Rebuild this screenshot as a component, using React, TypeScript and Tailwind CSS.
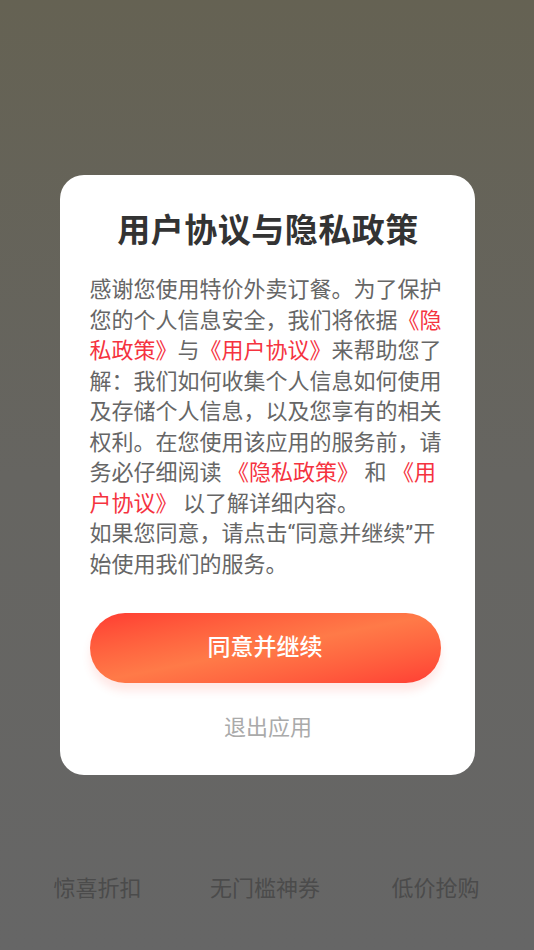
export default function App() {
  const font = { fontFamily: 'Roboto, "Noto Sans CJK SC", sans-serif' };
  const red = 'text-[#f5333f]';

  return (
    <div
      className="relative w-[534px] h-[950px] overflow-hidden bg-linear-to-b from-[#656253] via-[#666561] to-[#666666]"
      style={font}
    >
      {/* dialog */}
      <div className="flex justify-center pt-[175px]">
        <div className="w-[415px] h-[600px] bg-white rounded-[24px] pl-[30px] pr-[28px] pt-[34px] flex flex-col">
          <h1 className="text-center text-[33px] leading-[44px] font-bold text-[#333333] tracking-[0.5px]">
            用户协议与隐私政策
          </h1>
          <p className="mt-[22px] text-[22px] leading-[30.5px] text-[#666666]">
            感谢您使用特价外卖订餐。为了保护您的个人信息安全，我们将依据
            <span className={red}>《隐私政策》</span>与
            <span className={red}>《用户协议》</span>
            来帮助您了解：我们如何收集个人信息如何使用及存储个人信息，以及您享有的相关权利。在您使用该应用的服务前，请务必仔细阅读
            <span className={red}> 《隐私政策》</span> 和
            <span className={red}> 《用户协议》</span> 以了解详细内容。
            <br />
            如果您同意，请点击“同意并继续”开始使用我们的服务。
          </p>
          <button className="mt-[33px] w-[351px] h-[70px] rounded-full bg-linear-to-br from-[#ff3a32] via-[#ff7a48] to-[#ff3d34] text-white text-[23px] font-medium shadow-[0_8px_8px_rgba(255,90,80,0.14)]">
            同意并继续
          </button>
          <button className="mt-[22px] h-[44px] text-[22px] text-[#aaaaaa] text-center">
            退出应用
          </button>
        </div>
      </div>

      {/* dimmed tab labels under the overlay */}
      <div className="absolute left-0 right-0 top-[872px] flex text-[22px] leading-[34px] text-[#4b4b4b]">
        <div className="w-[195px] text-center">惊喜折扣</div>
        <div className="w-[140px] text-center">无门槛神券</div>
        <div className="w-[199px] text-center pl-[2px]">低价抢购</div>
      </div>
    </div>
  );
}
